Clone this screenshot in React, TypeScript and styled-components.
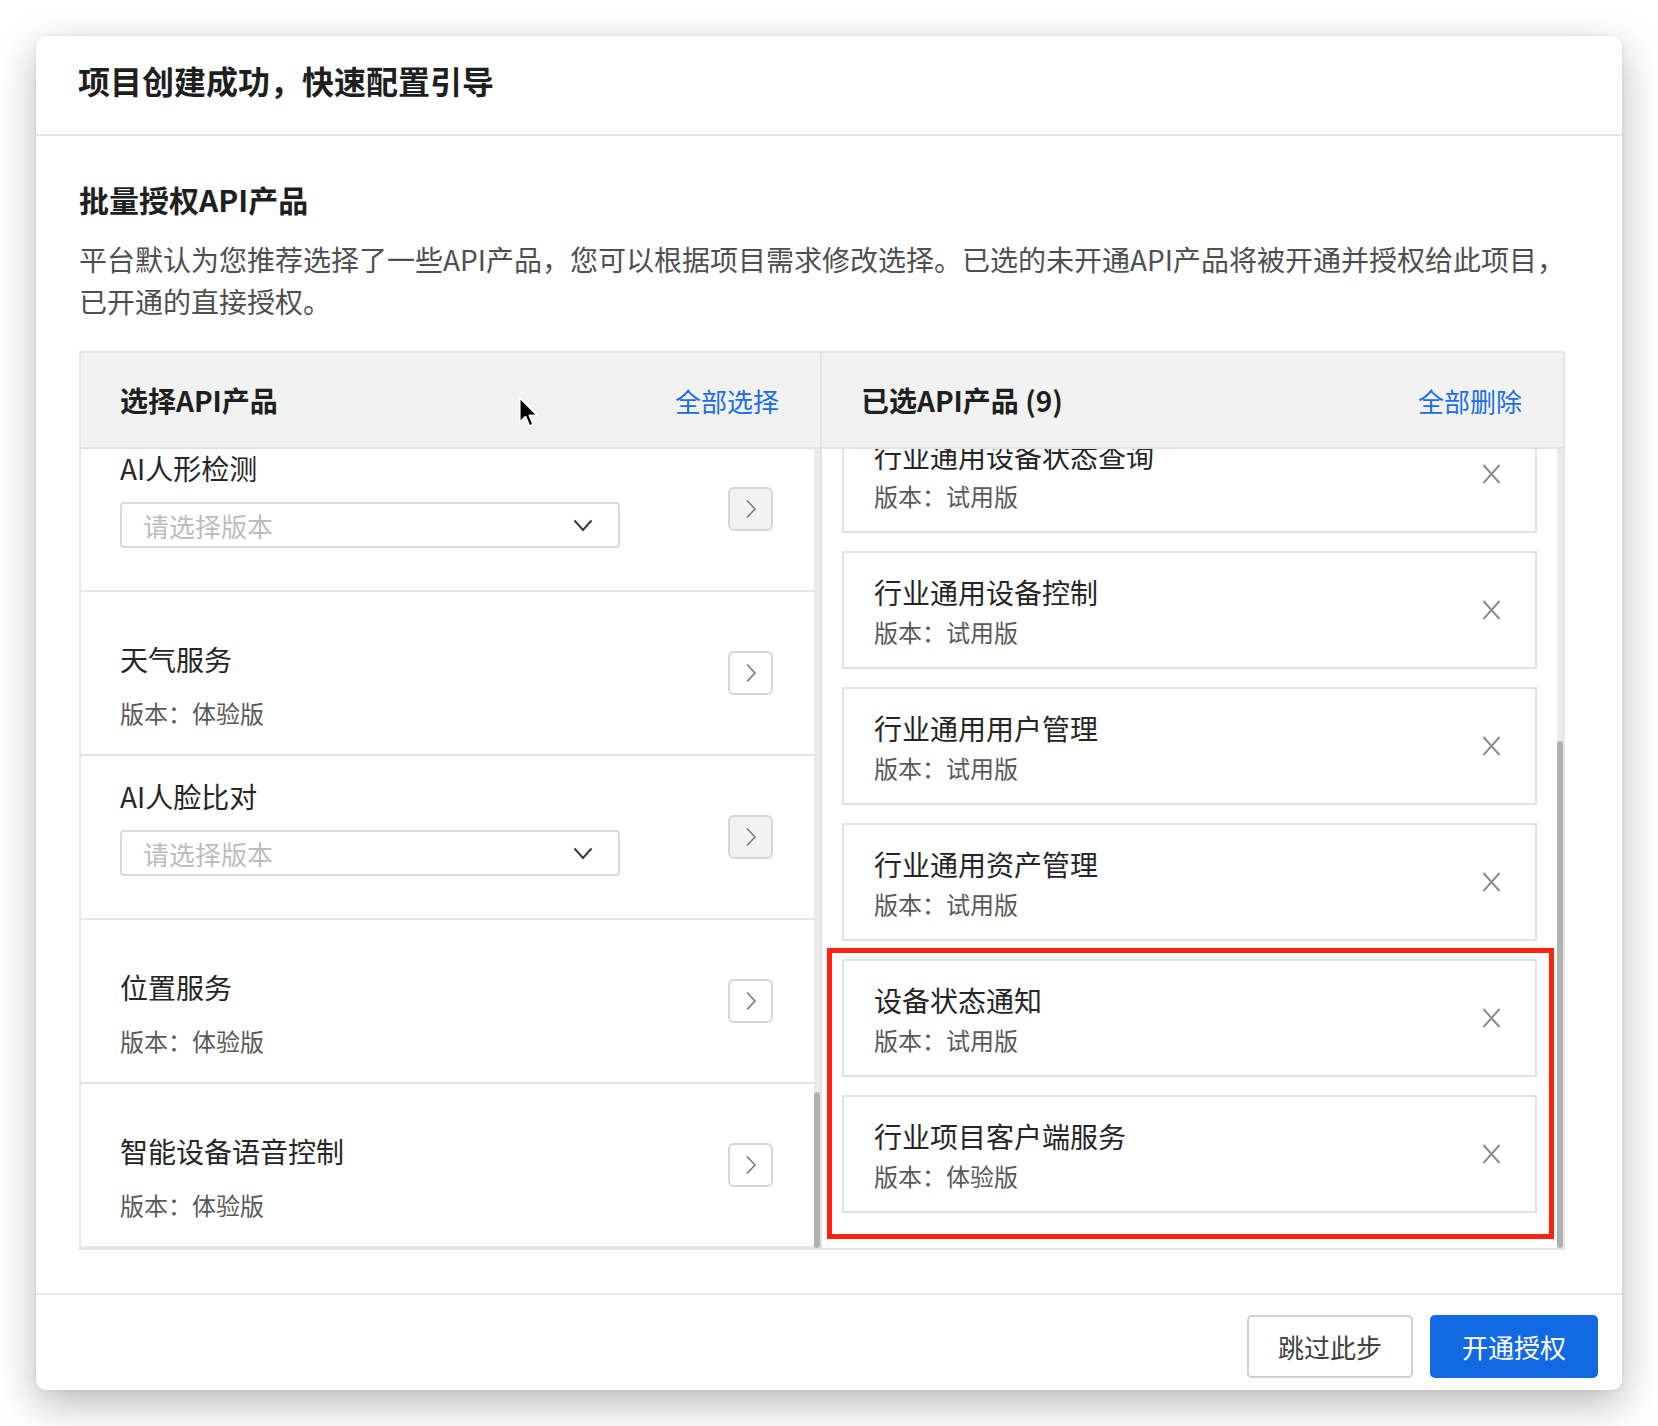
import { ReactNode, useLayoutEffect, useRef, useState } from 'react';
import styled, { createGlobalStyle, css } from 'styled-components';

type Product = { name: string; version?: string };

const LEFT_PRODUCTS: Product[] = [
  { name: '设备接入服务', version: '体验版' },
  { name: '设备影子服务', version: '体验版' },
  { name: 'AI车牌识别' },
  { name: '视频监控服务', version: '体验版' },
  { name: '短信通知服务', version: '体验版' },
  { name: 'AI物体识别' },
  { name: '语音播报服务', version: '体验版' },
  { name: '设备远程配置', version: '体验版' },
  { name: '云端存储服务', version: '体验版' },
  { name: 'AI行为分析' },
  { name: '消息推送服务', version: '体验版' },
  { name: '设备固件升级', version: '体验版' },
  { name: '地图轨迹服务', version: '体验版' },
  { name: 'AI文字识别' },
  { name: '数据分析服务', version: '体验版' },
  { name: '规则引擎服务', version: '体验版' },
  { name: '设备分组管理', version: '体验版' },
  { name: '空气质量服务', version: '体验版' },
  { name: '电子围栏服务', version: '体验版' },
  { name: '时间同步服务', version: '体验版' },
  { name: 'AI人形检测' },
  { name: '天气服务', version: '体验版' },
  { name: 'AI人脸比对' },
  { name: '位置服务', version: '体验版' },
  { name: '智能设备语音控制', version: '体验版' },
];

const SELECTED_PRODUCTS: Product[] = [
  { name: '行业通用设备管理', version: '试用版' },
  { name: '行业通用告警管理', version: '试用版' },
  { name: '行业通用数据统计', version: '试用版' },
  { name: '行业通用设备状态查询', version: '试用版' },
  { name: '行业通用设备控制', version: '试用版' },
  { name: '行业通用用户管理', version: '试用版' },
  { name: '行业通用资产管理', version: '试用版' },
  { name: '设备状态通知', version: '试用版' },
  { name: '行业项目客户端服务', version: '体验版' },
];

const ChevronRight = () => (
  <svg width="12" height="20" viewBox="0 0 12 20" fill="none">
    <path d="M2 1.5 L10 10 L2 18.5" stroke="#7a7a7a" strokeWidth="1.6" />
  </svg>
);

const ChevronDown = () => (
  <svg width="20" height="13" viewBox="0 0 20 13" fill="none">
    <path d="M1.5 1.5 L10 11 L18.5 1.5" stroke="#3a3a3a" strokeWidth="2" />
  </svg>
);

const CloseIcon = () => (
  <svg width="19" height="20" viewBox="0 0 19 20" fill="none">
    <path d="M1.5 1 L17.5 19 M17.5 1 L1.5 19" stroke="#8c8c8c" strokeWidth="2" />
  </svg>
);

const Cursor = () => (
  <svg width="22" height="34" viewBox="0 0 20 31" fill="none">
    <path
      d="M1.5 1.5 L1.5 24 L6.8 18.8 L10.4 27.5 L13.8 26 L10.3 17.6 L17.5 17.6 Z"
      fill="#000"
      stroke="#fff"
      strokeWidth="1.6"
      strokeLinejoin="round"
    />
  </svg>
);

// list that starts scrolled to the end, with a drawn scrollbar beside it
const ScrollArea = ({ children, cards }: { children: ReactNode; cards?: boolean }) => {
  const listRef = useRef<HTMLDivElement>(null);
  const [thumb, setThumb] = useState({ top: 0, height: 0 });

  const measure = () => {
    const el = listRef.current;
    if (!el) return;
    const ratio = el.clientHeight / el.scrollHeight;
    setThumb({ top: el.scrollTop * ratio, height: el.clientHeight * ratio });
  };

  useLayoutEffect(() => {
    const el = listRef.current;
    if (!el) return;
    el.scrollTop = el.scrollHeight;
    measure();
  }, []);

  return (
    <ScrollFrame>
      <ScrollList ref={listRef} $cards={cards} onScroll={measure}>
        {children}
      </ScrollList>
      <ScrollTrack>
        <ScrollThumb style={{ marginTop: thumb.top, height: thumb.height }} />
      </ScrollTrack>
    </ScrollFrame>
  );
};

const App = () => {
  return (
    <Page>
      <GlobalStyle />
      <Dialog>
        <DialogHeader>
          <DialogTitle>项目创建成功，快速配置引导</DialogTitle>
        </DialogHeader>

        <DialogBody>
          <SectionTitle>批量授权API产品</SectionTitle>
          <Description>
            平台默认为您推荐选择了一些API产品，您可以根据项目需求修改选择。已选的未开通API产品将被开通并授权给此项目，
            <br />
            已开通的直接授权。
          </Description>

          <TransferBox>
            <Panel $divider>
              <PanelHeader>
                <PanelTitle>选择API产品</PanelTitle>
                <TextLink>全部选择</TextLink>
              </PanelHeader>
              <ScrollArea>
                {LEFT_PRODUCTS.map((product, index) => (
                  <SourceItem key={`source-${index}`}>
                    <SourceInfo $withSelect={!product.version}>
                      <ItemName>{product.name}</ItemName>
                      {product.version ? (
                        <SourceVersion>版本：{product.version}</SourceVersion>
                      ) : (
                        <VersionSelect>
                          <Placeholder>请选择版本</Placeholder>
                          <ChevronDown />
                        </VersionSelect>
                      )}
                    </SourceInfo>
                    <MoveButton $disabled={!product.version}>
                      <ChevronRight />
                    </MoveButton>
                  </SourceItem>
                ))}
              </ScrollArea>
            </Panel>

            <Panel>
              <PanelHeader>
                <PanelTitle>已选API产品 ({SELECTED_PRODUCTS.length})</PanelTitle>
                <TextLink>全部删除</TextLink>
              </PanelHeader>
              <ScrollArea cards>
                {SELECTED_PRODUCTS.map((product, index) => (
                  <SelectedCard key={`selected-${index}`}>
                    <CardInfo>
                      <ItemName>{product.name}</ItemName>
                      <CardVersion>版本：{product.version}</CardVersion>
                    </CardInfo>
                    <CloseIcon />
                  </SelectedCard>
                ))}
              </ScrollArea>
            </Panel>

            <HighlightFrame />
          </TransferBox>
        </DialogBody>

        <DialogFooter>
          <Button>跳过此步</Button>
          <Button $primary>开通授权</Button>
        </DialogFooter>
      </Dialog>

      <CursorMark>
        <Cursor />
      </CursorMark>
    </Page>
  );
};

export default App;

const GlobalStyle = createGlobalStyle`
  * {
    box-sizing: border-box;
  }

  body {
    margin: 0;
    background: #ffffff;
    font-family: 'Noto Sans CJK SC', 'Liberation Sans', sans-serif;
    color: #262626;
  }
`;

const Page = styled.div`
  position: relative;
  width: 1658px;
  height: 1426px;
  padding: 36px;
  background: #ffffff;
`;

const Dialog = styled.div`
  width: 1586px;
  height: 1354px;
  display: flex;
  flex-direction: column;
  background: #ffffff;
  border-radius: 10px;
  box-shadow: 0 14px 42px rgba(0, 0, 0, 0.28), 0 0 4px rgba(0, 0, 0, 0.08);
  overflow: hidden;
`;

const DialogHeader = styled.div`
  height: 100px;
  padding: 24px 42px 0;
  border-bottom: 2px solid #e6e6e6;
`;

const DialogTitle = styled.h1`
  margin: 0;
  font-size: 32px;
  line-height: 40px;
  font-weight: 700;
  color: #1f1f1f;
`;

const DialogBody = styled.div`
  position: relative;
  flex: 1;
  padding: 42px 57px 43px 43px;
  display: flex;
  flex-direction: column;
`;

const SectionTitle = styled.h2`
  margin: 0;
  font-size: 30px;
  line-height: 42px;
  font-weight: 700;
  color: #1f1f1f;
`;

const Description = styled.p`
  margin: 18px 0 0;
  font-size: 28px;
  line-height: 42px;
  color: #4f4f4f;
  white-space: nowrap;
`;

const TransferBox = styled.div`
  position: relative;
  margin-top: 29px;
  width: 1486px;
  height: 899px;
  display: grid;
  grid-template-columns: 741px 741px;
  border: 2px solid #e6e6e6;
`;

const Panel = styled.div<{ $divider?: boolean }>`
  display: flex;
  flex-direction: column;
  min-height: 0;
  border-right: ${({ $divider }) => ($divider ? '2px solid #e3e3e3' : 'none')};
`;

const PanelHeader = styled.div`
  height: 96px;
  flex-shrink: 0;
  display: flex;
  align-items: center;
  justify-content: space-between;
  padding: 0 41px 0 39px;
  background: #f2f2f2;
  border-bottom: 2px solid #e3e3e3;
`;

const PanelTitle = styled.div`
  font-size: 28px;
  font-weight: 700;
  color: #1f1f1f;
`;

const TextLink = styled.span`
  font-size: 26px;
  color: #1a6ee6;
  cursor: pointer;
`;

const ScrollFrame = styled.div`
  flex: 1;
  min-height: 0;
  display: flex;
`;

const ScrollList = styled.div<{ $cards?: boolean }>`
  flex: 1;
  min-width: 0;
  overflow-y: auto;
  scrollbar-width: none;
  ${({ $cards }) =>
    $cards &&
    css`
      display: flex;
      flex-direction: column;
      gap: 18px;
      padding: 18px 20px 35px;
    `}
`;

const ScrollTrack = styled.div`
  width: 6px;
  flex-shrink: 0;
  background: #ebebeb;
`;

const ScrollThumb = styled.div`
  width: 6px;
  background: #b0b0b0;
  border-radius: 3px;
`;

const SourceItem = styled.div`
  height: 164px;
  display: flex;
  align-items: center;
  justify-content: space-between;
  padding: 0 41px 0 39px;
  border-bottom: 2px solid #e6e6e6;
`;

const SourceInfo = styled.div<{ $withSelect: boolean }>`
  align-self: stretch;
  display: flex;
  flex-direction: column;
  padding-top: ${({ $withSelect }) => ($withSelect ? '20px' : '47px')};
`;

const ItemName = styled.div`
  font-size: 28px;
  line-height: 40px;
  color: #262626;
  white-space: nowrap;
`;

const SourceVersion = styled.div`
  margin-top: 17px;
  font-size: 24px;
  line-height: 34px;
  color: #595959;
`;

const VersionSelect = styled.div`
  margin-top: 14px;
  width: 500px;
  height: 46px;
  display: flex;
  align-items: center;
  justify-content: space-between;
  padding: 0 25px 0 21px;
  border: 2px solid #d9d9d9;
  border-radius: 4px;
  background: #ffffff;
`;

const Placeholder = styled.span`
  font-size: 26px;
  color: #bdbdbd;
`;

const MoveButton = styled.button<{ $disabled: boolean }>`
  width: 45px;
  height: 44px;
  padding: 0;
  display: flex;
  align-items: center;
  justify-content: center;
  border: 2px solid #d6d6d6;
  border-radius: 6px;
  background: ${({ $disabled }) => ($disabled ? '#f2f2f2' : '#ffffff')};
  cursor: pointer;
`;

const SelectedCard = styled.div`
  height: 118px;
  flex-shrink: 0;
  display: flex;
  align-items: center;
  justify-content: space-between;
  padding: 0 34px 0 30px;
  border: 2px solid #e3e3e3;
  background: #ffffff;
`;

const CardInfo = styled.div`
  display: flex;
  flex-direction: column;
  gap: 3px;
`;

const CardVersion = styled.div`
  font-size: 24px;
  line-height: 34px;
  color: #595959;
`;

const HighlightFrame = styled.div`
  position: absolute;
  left: 746px;
  top: 595px;
  width: 727px;
  height: 291px;
  border: 5px solid #ff2211;
  pointer-events: none;
`;

const DialogFooter = styled.div`
  height: 97px;
  flex-shrink: 0;
  display: flex;
  justify-content: flex-end;
  align-items: flex-start;
  gap: 17px;
  padding: 20px 24px 0;
  border-top: 2px solid #e6e6e6;
`;

const Button = styled.button<{ $primary?: boolean }>`
  width: ${({ $primary }) => ($primary ? '168px' : '166px')};
  height: 63px;
  padding: 0;
  font-family: inherit;
  font-size: 26px;
  border-radius: 5px;
  cursor: pointer;
  border: 2px solid ${({ $primary }) => ($primary ? '#1269e2' : '#d0d0d0')};
  background: ${({ $primary }) => ($primary ? '#1269e2' : '#ffffff')};
  color: ${({ $primary }) => ($primary ? '#ffffff' : '#404040')};
`;

const CursorMark = styled.div`
  position: absolute;
  left: 518px;
  top: 396px;
  line-height: 0;
  pointer-events: none;
`;
